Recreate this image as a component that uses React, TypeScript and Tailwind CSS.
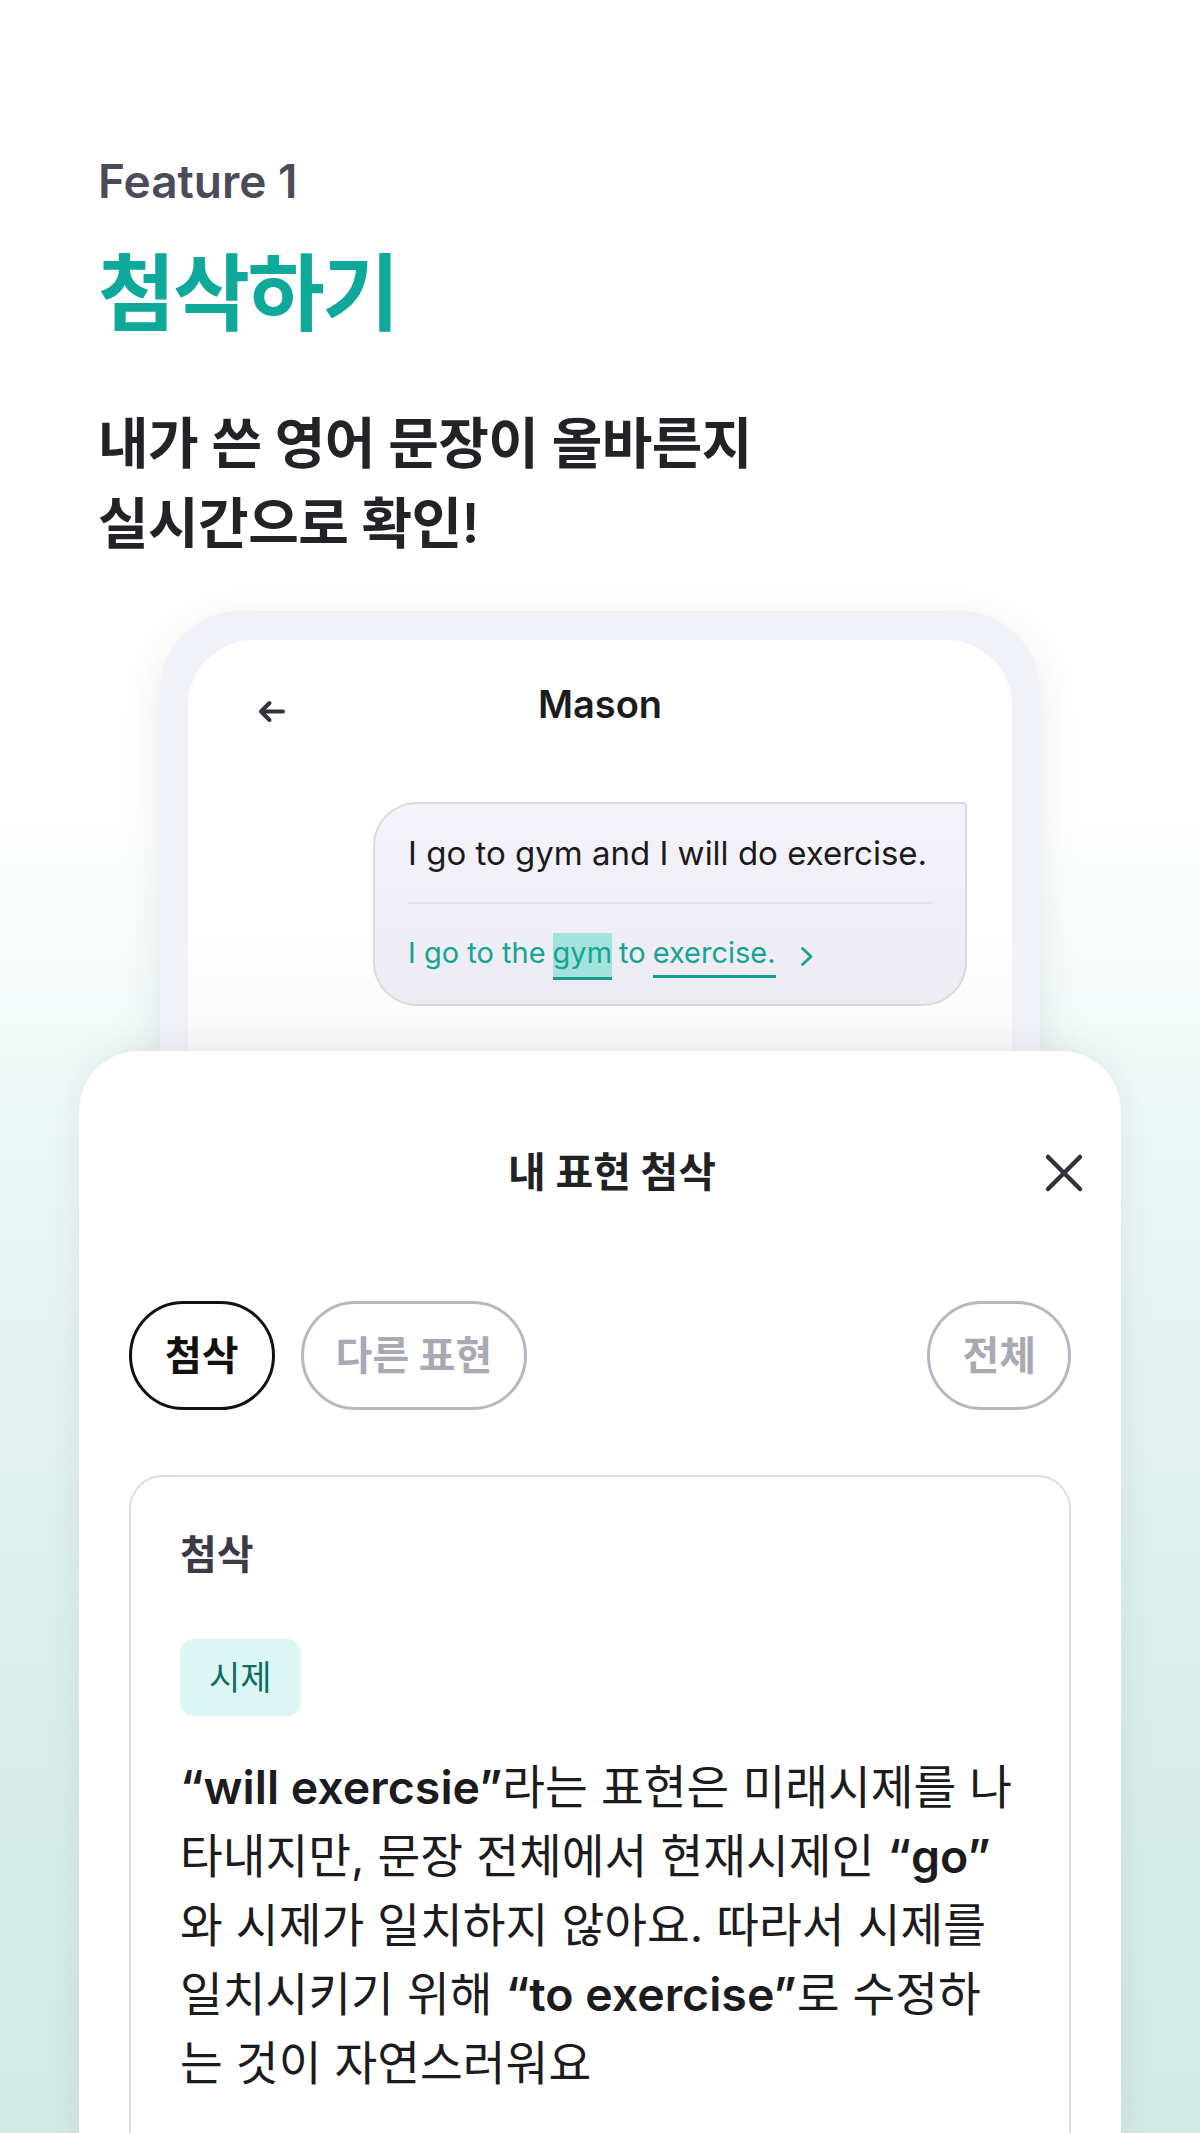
const sans = "font-['Inter','Noto_Sans_CJK_KR',sans-serif]"

function BackArrow() {
  return (
    <svg width="27" height="23" viewBox="0 0 27 23" fill="none" className="text-[#34343e]">
      <path d="M25 11.5H3.5M11.5 3L3 11.5L11.5 20" stroke="currentColor" strokeWidth="4" strokeLinecap="round" strokeLinejoin="round" />
    </svg>
  )
}

function CloseIcon() {
  return (
    <svg width="40" height="40" viewBox="0 0 40 40" fill="none" className="text-[#32323c]">
      <path d="M4 4L36 36M36 4L4 36" stroke="currentColor" strokeWidth="4.5" strokeLinecap="round" />
    </svg>
  )
}

function Chevron() {
  return (
    <svg width="14" height="21" viewBox="0 0 14 21" fill="none" className="text-[#16a394]">
      <path d="M2.5 2.5L11 10.5L2.5 18.5" stroke="currentColor" strokeWidth="2.8" strokeLinecap="round" strokeLinejoin="round" />
    </svg>
  )
}

function Chip({ label, active }: { label: string; active?: boolean }) {
  return (
    <div
      className={
        active
          ? 'flex h-[109px] items-center rounded-full border-[3px] border-[#111] px-[33px] text-[40px] font-bold text-[#111]'
          : 'flex h-[109px] items-center rounded-full border-[3px] border-[#b7b7c1] px-[32px] text-[40px] font-bold text-[#a9a9b4]'
      }
    >
      {label}
    </div>
  )
}

function PhoneMock() {
  return (
    <div className="mx-auto h-[560px] w-[880px] rounded-[80px] bg-[#f1f1f8] px-[28px] pt-[29px] shadow-[0_12px_40px_rgba(40,40,60,0.10)]">
      <div className="h-full rounded-t-[66px] bg-[linear-gradient(180deg,#ffffff_0%,#ffffff_55%,#f3f3f6_100%)]">
        {/* header */}
        <div className="grid h-[128px] grid-cols-[1fr_auto_1fr] items-center px-[70px]">
          <div className="mt-[14px]">
            <BackArrow />
          </div>
          <div className="text-[38px] font-semibold text-[#1c1c20]">Mason</div>
          <div />
        </div>

        {/* bubble */}
        <div className="mt-[34px] flex justify-end pr-[45px]">
          <div className="w-[594px] rounded-[44px] rounded-tr-[4px] border-2 border-[#d9d9e2] bg-[linear-gradient(180deg,#f4f3fa_0%,#ebebf1_100%)] px-[33px] pb-[25px] pt-[29px]">
            <div className="text-[33px] leading-[40px] text-[#1a1a1c]">I go to gym and I will do exercise.</div>
            <div className="mt-[29px] h-[2px] bg-[#e2e2ea]" />
            <div className="mt-[29px] flex h-[46px] items-baseline text-[29px] leading-[40px] text-[#16a394]">
              <span>I go to the</span>
              <span className="ml-[7px] border-b-[3px] border-[#139c8e] bg-[#a4e2dc] pb-[4px]">gym</span>
              <span className="ml-[7px]">to</span>
              <span className="ml-[7px] border-b-[3px] border-[#139c8e] pb-[2px]">exercise.</span>
              <span className="ml-[24px] flex self-center">
                <Chevron />
              </span>
            </div>
          </div>
        </div>
      </div>
    </div>
  )
}

export default function App() {
  return (
    <div
      className={`h-[2133px] w-[1200px] overflow-hidden bg-[linear-gradient(180deg,#ffffff_0%,#ffffff_38%,#eaf6f4_55%,#dbefec_75%,#d2e9e6_100%)] ${sans}`}
    >
      <div className="pl-[98px] pt-[158px]">
        <p className="text-[46px] font-semibold leading-[46px] text-[#4b4b59]">Feature 1</p>
        <h1 className="mt-[48px] text-[84px] font-bold leading-[84px] tracking-[-0.03em] text-[#0ea99b]">첨삭하기</h1>
        <p className="mt-[67px] text-[55px] font-semibold leading-[80px] tracking-[-0.01em] text-[#232327]">
          내가 쓴 영어 문장이 올바른지
          <br />
          실시간으로 확인!
        </p>
      </div>

      <div className="mt-[48px]">
        <PhoneMock />
      </div>

      <div className="relative z-10 mx-auto -mt-[120px] h-[1100px] w-[1042px] rounded-t-[60px] bg-white pt-[91px] shadow-[0_-6px_36px_rgba(40,40,60,0.08)]">
        <div className="grid h-[48px] grid-cols-[1fr_auto_1fr] items-center px-[37px]">
          <div />
          <div className="pl-[24px] text-[41px] font-bold text-[#222226]">내 표현 첨삭</div>
          <div className="flex justify-end">
            <CloseIcon />
          </div>
        </div>

        <div className="mt-[111px] flex items-center gap-[26px] px-[50px]">
          <Chip label="첨삭" active />
          <Chip label="다른 표현" />
          <div className="flex-1" />
          <Chip label="전체" />
        </div>

        <div className="mx-[50px] mt-[65px] h-[800px] rounded-[34px] border-[2.5px] border-[#dcdce6] px-[49px] pt-[58px]">
          <div className="text-[40px] font-bold leading-[40px] text-[#3b3b46]">첨삭</div>
          <div className="mt-[64px] inline-flex h-[77px] items-center rounded-[14px] bg-[#dcf7f3] px-[29px] text-[34px] text-[#0f6b63]">
            시제
          </div>
          <div className="mt-[37px] text-[46.5px] leading-[69px] text-[#1c1c1f]">
            <div className="whitespace-nowrap">
              <span className="font-semibold">“will exercsie”</span>라는 표현은 미래시제를 나
            </div>
            <div className="whitespace-nowrap">
              타내지만, 문장 전체에서 현재시제인 <span className="font-semibold">“go”</span>
            </div>
            <div className="whitespace-nowrap">와 시제가 일치하지 않아요. 따라서 시제를</div>
            <div className="whitespace-nowrap">
              일치시키기 위해 <span className="font-semibold">“to exercise”</span>로 수정하
            </div>
            <div className="whitespace-nowrap">는 것이 자연스러워요</div>
          </div>
        </div>
      </div>
    </div>
  )
}
